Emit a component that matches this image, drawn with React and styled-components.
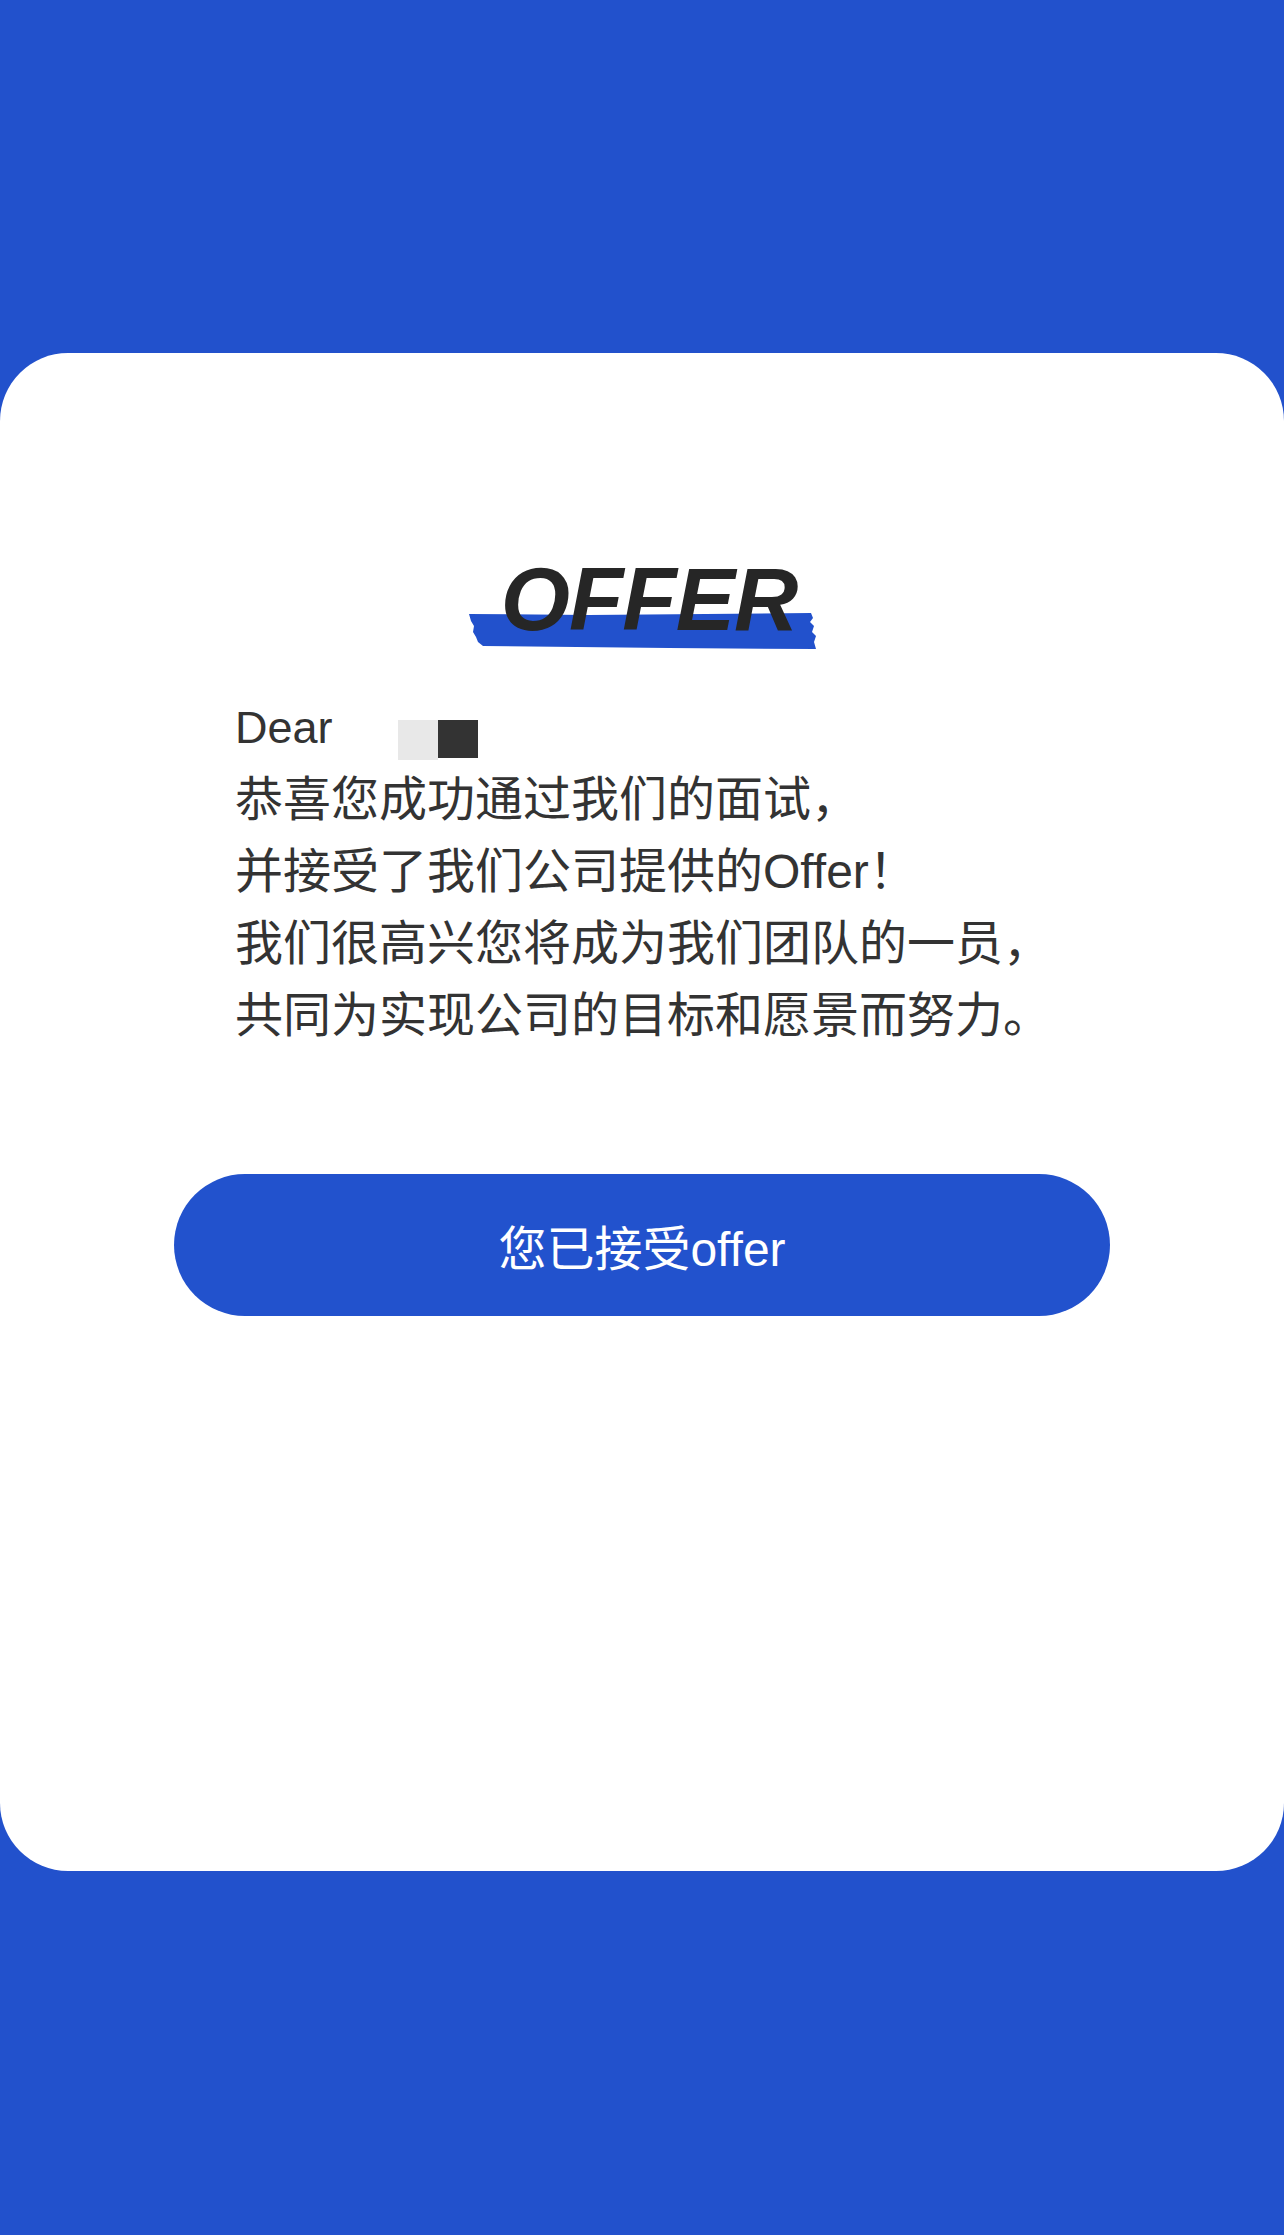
import React from 'react'
import styled, { createGlobalStyle } from 'styled-components'

const GlobalStyle = createGlobalStyle`
  html, body {
    margin: 0;
    padding: 0;
    background: #2251cc;
  }
  * {
    box-sizing: border-box;
  }
`

const Page = styled.div`
  min-height: 2235px;
  padding-top: 353px;
  background: #2251cc;
  font-family: 'Liberation Sans', 'Noto Sans CJK SC', Arial, sans-serif;
`

const Card = styled.div`
  height: 1518px;
  background: #ffffff;
  border-radius: 68px;
  padding-top: 202px;
  display: flex;
  flex-direction: column;
`

const TitleWrapper = styled.div`
  align-self: center;
  position: relative;
  margin-left: 14px;
`

const Brush = styled.svg`
  position: absolute;
  left: -32px;
  top: 58px;
  width: 347px;
  height: 37px;
  z-index: 0;
`

const Title = styled.div`
  position: relative;
  z-index: 1;
  font-family: 'Liberation Sans', Arial, sans-serif;
  font-size: 89px;
  line-height: 89px;
  font-weight: 700;
  font-style: italic;
  color: #262626;
  letter-spacing: -1px;
`

const Letter = styled.div`
  margin: 47px 0 0 235px;
  font-size: 48px;
  line-height: 72px;
  color: #333333;
`

const Line = styled.div`
  white-space: nowrap;
`

const Greeting = styled.span`
  font-size: 45px;
`

const Redacted = styled.span`
  display: inline-block;
  width: 40px;
  height: ${(props) => (props.dark ? '38px' : '40px')};
  background: ${(props) => (props.dark ? '#333333' : '#e8e8e8')};
  vertical-align: ${(props) => (props.dark ? '-15px' : '-17px')};
  margin-left: ${(props) => (props.first ? '65px' : '0')};
`

const Button = styled.button`
  align-self: center;
  margin-top: 122px;
  width: 936px;
  height: 142px;
  border: none;
  border-radius: 71px;
  background: #2252cd;
  color: #ffffff;
  font-family: 'Liberation Sans', 'Noto Sans CJK SC', Arial, sans-serif;
  font-size: 48px;
  cursor: pointer;
`

function BrushStroke() {
  return (
    <Brush viewBox="0 0 347 37" preserveAspectRatio="none">
      <path
        d="M0 1 L120 2 L342 0 L344 5 L341 9 L345 13 L343 19 L347 23 L345 29 L347 36 L200 35 L14 33 L9 29 L7 24 L4 19 L5 13 L2 8 Z"
        fill="#2251cc"
      />
    </Brush>
  )
}

export default function App() {
  return (
    <>
      <GlobalStyle />
      <Page>
        <Card>
          <TitleWrapper>
            <BrushStroke />
            <Title>OFFER</Title>
          </TitleWrapper>
          <Letter>
            <Line>
              <Greeting>Dear</Greeting>
              <Redacted first />
              <Redacted dark />
            </Line>
            <Line>恭喜您成功通过我们的面试，</Line>
            <Line>并接受了我们公司提供的Offer！</Line>
            <Line>我们很高兴您将成为我们团队的一员，</Line>
            <Line>共同为实现公司的目标和愿景而努力。</Line>
          </Letter>
          <Button>您已接受offer</Button>
        </Card>
      </Page>
    </>
  )
}
